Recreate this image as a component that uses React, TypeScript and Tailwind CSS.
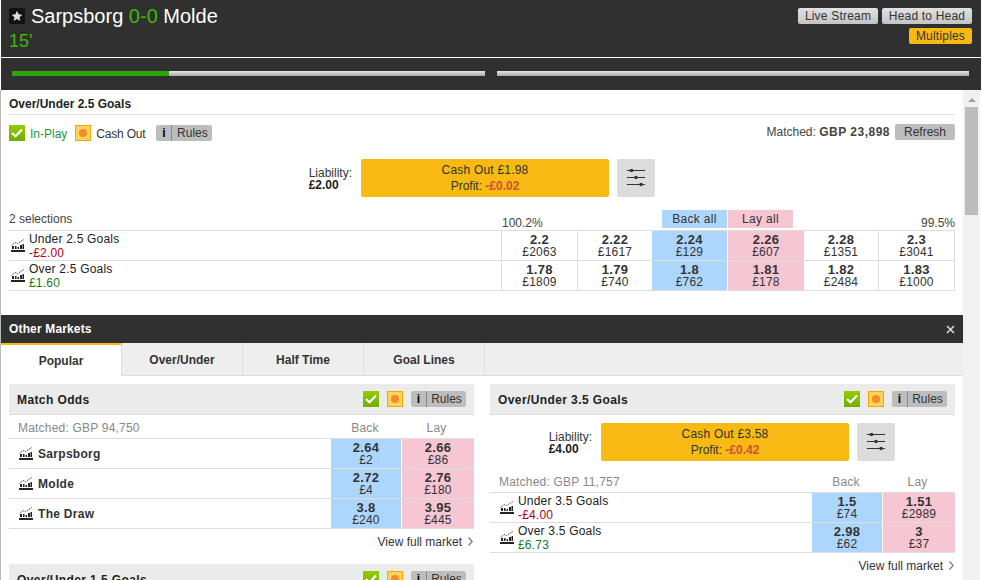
type Sel = { name: string; pl?: string; plColor?: string; offers: [string, string][] };

function ChartIcon() {
  return (
    <svg width="14" height="13" viewBox="0 0 14 13" className="shrink-0" fill="none">
      <path d="M0.5 6.5 L4 3.5 L6.5 4.5 L13 0.5" stroke="#555" strokeWidth="1" strokeDasharray="1.5 0.7" />
      <rect x="1" y="7" width="2" height="3" fill="#222" />
      <rect x="4" y="7" width="1.5" height="3" fill="#222" />
      <rect x="6.5" y="8" width="1.5" height="2" fill="#222" />
      <rect x="9" y="6" width="2" height="4" fill="#222" />
      <rect x="11.5" y="5" width="1.5" height="5" fill="#222" />
      <rect x="0" y="11" width="14" height="2" fill="#222" />
    </svg>
  );
}

function SlidersIcon() {
  return (
    <svg width="18" height="18" viewBox="0 0 18 18" fill="none">
      <path d="M0 1.500h18M0 8.500h18M0 15.500h18" stroke="#333" strokeWidth="1" />
      <circle cx="4.500" cy="1.500" r="1.800" fill="#333" />
      <circle cx="9" cy="8.500" r="1.800" fill="#333" />
      <circle cx="14" cy="15.500" r="1.800" fill="#333" />
    </svg>
  );
}

function InPlayBox() {
  return (
    <span className="w-4 h-4 bg-gradient-to-b from-[#94cc00] to-[#72ac00] flex items-center justify-center shrink-0">
      <svg width="12" height="10" viewBox="0 0 12 10" fill="none">
        <path d="M1 5 L4.500 8.200 L11 1.500" stroke="#fff" strokeWidth="2.200" />
      </svg>
    </span>
  );
}

function CashBox() {
  return (
    <span className="w-4 h-4 bg-[#f6d55c] border border-[#f7a600] flex items-center justify-center shrink-0">
      <span className="w-2 h-2 rounded-full bg-[#f7882c]" />
    </span>
  );
}

function RulesBtn({ className }: { className: string }) {
  return (
    <span className={`h-4 bg-[#bdbdbd] rounded-[2px] flex items-center text-xs text-[#333] shrink-0 ${className}`}>
      <span className="w-4 text-center font-bold text-black border-r border-[#888] leading-4">i</span>
      <span className="flex-1 text-center">Rules</span>
    </span>
  );
}

function Offer({ odds, size, className }: { odds: string; size: string; className: string }) {
  return (
    <div className={`flex flex-col items-center justify-center text-[#333] ${className}`}>
      <span className="font-bold text-[13px] leading-[12px] tracking-[0.3px]">{odds}</span>
      <span className="text-xs leading-[12px] tracking-[0.2px]">{size}</span>
    </div>
  );
}

function PlName({ sel }: { sel: Sel }) {
  return (
    <div className="flex flex-col">
      <span className="text-xs leading-[14px] tracking-[0.2px] text-[#222]">{sel.name}</span>
      <span className={`text-xs leading-[14px] tracking-[0.2px] ${sel.plColor}`}>{sel.pl}</span>
    </div>
  );
}

function CashOutRow({ liab, cash, profit }: { liab: string; cash: string; profit: string }) {
  return (
    <div className="flex justify-end gap-2 h-[38px]">
      <div className="flex flex-col justify-center text-xs leading-[12px] text-[#333] mr-px">
        <span className="mt-[2px]">Liability:</span>
        <span className="font-bold text-[#222]">{liab}</span>
      </div>
      <div className="w-[248px] bg-[#f7b912] rounded-[2px] flex flex-col items-center justify-center text-xs text-[#333]">
        <span className="leading-[16px] tracking-[0.2px]">{cash}</span>
        <span className="leading-[16px]">
          Profit: <span className="font-bold text-[#d0503c]">{profit}</span>
        </span>
      </div>
      <div className="w-[38px] bg-[#dcdcdc] rounded-[2px] flex items-center justify-center">
        <SlidersIcon />
      </div>
    </div>
  );
}

function MiniHeader({ title }: { title: string }) {
  return (
    <div className="h-[31px] bg-[#ebebeb] border-b border-[#ddd] flex items-center pl-2 pr-2 gap-2">
      <span className="font-bold text-xs tracking-[0.4px] text-[#222] flex-1 mt-[2px]">{title}</span>
      <InPlayBox />
      <CashBox />
      <RulesBtn className="w-[55px]" />
    </div>
  );
}

function MiniTable({ matched, rows, withPl }: { matched: string; rows: Sel[]; withPl?: boolean }) {
  return (
    <>
      <div className="h-[24px] pt-[2px] flex items-center border-b border-[#ddd] text-xs text-[#888] tracking-[0.2px]">
        <span className="flex-1 pl-[9px]">{matched}</span>
        <span className="w-[71px] text-center pr-[3px]">Back</span>
        <span className="w-[72px] text-center pr-[3px]">Lay</span>
      </div>
      {rows.map((r) => (
        <div key={r.name} className="h-[30px] flex items-center border-b border-[#ddd]">
          <div className={`flex-1 flex items-center pl-[10px] ${withPl ? "gap-[4px]" : "gap-[5px]"}`}>
            <ChartIcon />
            {withPl ? <PlName sel={r} /> : <span className="text-xs font-bold text-[#333] tracking-[0.3px]">{r.name}</span>}
          </div>
          <Offer odds={r.offers[0][0]} size={r.offers[0][1]} className="w-[70px] h-full bg-[#add6ff]" />
          <Offer odds={r.offers[1][0]} size={r.offers[1][1]} className="w-[72px] h-full ml-px bg-[#f6c6d3]" />
        </div>
      ))}
      <div className="h-[25px] flex items-center justify-end text-xs text-[#333] gap-[6px] pr-px">
        View full market
        <svg width="5" height="9" viewBox="0 0 5 9" fill="none"><path d="M0.500 0.500 L4.200 4.500 L0.500 8.500" stroke="#777" strokeWidth="1.200" /></svg>
      </div>
    </>
  );
}

const mainRows: Sel[] = [
  { name: "Under 2.5 Goals", pl: "-£2.00", plColor: "text-[#b00020]", offers: [["2.2", "£2063"], ["2.22", "£1617"], ["2.24", "£129"], ["2.26", "£607"], ["2.28", "£1351"], ["2.3", "£3041"]] },
  { name: "Over 2.5 Goals", pl: "£1.60", plColor: "text-[#1a7a1a]", offers: [["1.78", "£1809"], ["1.79", "£740"], ["1.8", "£762"], ["1.81", "£178"], ["1.82", "£2484"], ["1.83", "£1000"]] },
];

const oddsRows: Sel[] = [
  { name: "Sarpsborg", offers: [["2.64", "£2"], ["2.66", "£86"]] },
  { name: "Molde", offers: [["2.72", "£4"], ["2.76", "£180"]] },
  { name: "The Draw", offers: [["3.8", "£240"], ["3.95", "£445"]] },
];

const ou35Rows: Sel[] = [
  { name: "Under 3.5 Goals", pl: "-£4.00", plColor: "text-[#b00020]", offers: [["1.5", "£74"], ["1.51", "£2989"]] },
  { name: "Over 3.5 Goals", pl: "£6.73", plColor: "text-[#1a7a1a]", offers: [["2.98", "£62"], ["3", "£37"]] },
];

const cellCls = [
  "w-[76px] border-l border-[#ddd]",
  "w-[75px] border-l border-[#ddd]",
  "w-[75px] bg-[#add6ff]",
  "w-[76px] ml-px bg-[#f6c6d3]",
  "w-[74px]",
  "w-[77px] border-l border-[#ddd] border-r",
];

export default function App() {
  return (
    <div className="w-[982px] h-[580px] overflow-hidden bg-white flex flex-col font-['Liberation_Sans',Arial,sans-serif]">
      <div className="w-[980px] ml-px shrink-0 bg-[#303030]">
        <div className="h-[57px] flex justify-between pl-2 pr-[9px]">
          <div>
            <div className="flex items-center gap-[6px] h-6 mt-1">
              <span className="w-4 h-4 bg-[#111] rounded-[2px] flex items-center justify-center">
                <svg width="12" height="12" viewBox="0 0 24 24" fill="#ddd"><path d="M12 1.500l3.200 7 7.600.800-5.700 5.100 1.600 7.500L12 18l-6.700 3.900 1.600-7.500L1.200 9.300l7.600-.800z" /></svg>
              </span>
              <span className="text-xl leading-6 text-white">
                Sarpsborg <span className="text-[#3cb80c]">0-0</span> Molde
              </span>
            </div>
            <div className="text-[18px] leading-5 text-[#3cb80c] mt-[3px]">15'</div>
          </div>
          <div className="flex flex-col items-end gap-1 pt-2">
            <div className="flex gap-1">
              <span className="h-4 w-20 bg-gradient-to-b from-[#e2e2e2] to-[#c4c4c4] rounded-[2px] text-xs leading-4 text-center text-[#333] tracking-[0.2px]">Live Stream</span>
              <span className="h-4 w-[90px] bg-gradient-to-b from-[#e2e2e2] to-[#c4c4c4] rounded-[2px] text-xs leading-4 text-center text-[#333] tracking-[0.2px]">Head to Head</span>
            </div>
            <span className="h-4 w-[63px] bg-[#f7b912] rounded-[2px] text-xs leading-4 text-center text-[#333] tracking-[0.2px]">Multiples</span>
          </div>
        </div>
        <div className="h-px bg-white" />
        <div className="h-[32px] flex items-start gap-3 pt-[13px] pl-[11px] pr-[11px]">
          <div className="w-[473px] h-[5px] flex bg-gradient-to-b from-[#e6e6e6] to-[#a8a8a8]">
            <div className="w-[157px] h-full bg-[#2ca50a]" />
          </div>
          <div className="w-[472px] h-[5px] bg-gradient-to-b from-[#e6e6e6] to-[#a8a8a8]" />
        </div>
      </div>

      <div className="flex-1 flex min-h-0">
        <div className="w-[963px] border-l border-[#bbb] shrink-0 overflow-hidden">
          <div className="pl-2 pr-2">
            <div className="h-[25px] pt-[4px] border-b border-[#ddd] flex items-center font-bold text-xs text-[#222]">
              Over/Under 2.5 Goals
            </div>
            <div className="flex items-center h-[36px] text-xs">
              <InPlayBox />
              <span className="ml-[5px] text-[#1a9a3a] mt-px">In-Play</span>
              <span className="ml-2"><CashBox /></span>
              <span className="ml-[5px] text-[#333] mt-px tracking-[-0.2px]">Cash Out</span>
              <span className="ml-[11px]"><RulesBtn className="w-14" /></span>
              <span className="flex-1 text-right text-[#444] mr-[5px] -mt-[2px]">
                Matched: <span className="font-bold tracking-[0.5px]">GBP 23,898</span>
              </span>
              <span className="w-[60px] h-4 -mt-[2px] bg-[#bdbdbd] rounded-[2px] text-center leading-4 text-[#333]">Refresh</span>
            </div>
            <div className="mt-[8px] pr-[300px]">
              <CashOutRow liab="£2.00" cash="Cash Out £1.98" profit="-£0.02" />
            </div>
            <div className="h-[33px] flex items-end pb-[2px] text-xs text-[#444]">
              <span className="w-[493px] pb-[1px]">2 selections</span>
              <span className="w-[160px] -mb-[3px]">100.2%</span>
              <span className="w-[65px] h-[18px] bg-[#add6ff] text-center leading-[18px] text-[#333] tracking-[0.3px]">Back all</span>
              <span className="w-[65px] h-[18px] ml-px bg-[#f6c6d3] text-center leading-[18px] text-[#333] tracking-[0.3px]">Lay all</span>
              <span className="flex-1 text-right -mb-[3px]">99.5%</span>
            </div>
            <div className="border-t border-[#ddd]">
              {mainRows.map((r) => (
                <div key={r.name} className="h-[30px] flex items-stretch border-b border-[#ddd]">
                  <div className="w-[492px] flex items-center gap-[4px] pl-[2px]">
                    <ChartIcon />
                    <PlName sel={r} />
                  </div>
                  {r.offers.map((o, i) => (
                    <Offer key={o[1]} odds={o[0]} size={o[1]} className={cellCls[i]} />
                  ))}
                </div>
              ))}
            </div>
          </div>

          <div className="mt-6 h-[28px] bg-[#303030] flex items-center justify-between pl-2 pr-2 text-white">
            <span className="font-bold text-xs tracking-[0.15px]">Other Markets</span>
            <svg width="9" height="9" viewBox="0 0 9 9" fill="none"><path d="M1 1l7 7M8 1l-7 7" stroke="#ddd" strokeWidth="1.500" /></svg>
          </div>
          <div className="h-[33px] flex bg-[#eee] border-b border-[#ddd] text-xs font-bold text-[#333]">
            <div className="w-[121px] h-[33px] bg-white border-t-2 border-[#f7b912] border-r border-r-[#ddd] flex items-center justify-center">Popular</div>
            <div className="w-[121px] pt-[2px] border-r border-[#ddd] flex items-center justify-center">Over/Under</div>
            <div className="w-[121px] pt-[2px] border-r border-[#ddd] flex items-center justify-center">Half Time</div>
            <div className="w-[121px] pt-[2px] border-r border-[#ddd] flex items-center justify-center">Goal Lines</div>
          </div>

          <div className="flex gap-4 pl-2 pr-2 mt-2">
            <div className="w-[465px]">
              <MiniHeader title="Match Odds" />
              <MiniTable matched="Matched: GBP 94,750" rows={oddsRows} />
              <div className="mt-[10px]">
                <MiniHeader title="Over/Under 1.5 Goals" />
              </div>
            </div>
            <div className="w-[465px]">
              <MiniHeader title="Over/Under 3.5 Goals" />
              <div className="mt-2 pr-[60px]">
                <CashOutRow liab="£4.00" cash="Cash Out £3.58" profit="-£0.42" />
              </div>
              <div className="mt-[8px]">
                <MiniTable matched="Matched: GBP 11,757" rows={ou35Rows} withPl />
              </div>
            </div>
          </div>
        </div>

        <div className="w-[17px] bg-[#f1f1f1] flex flex-col items-center shrink-0">
          <div className="mt-[8px] w-0 h-0 border-l-4 border-r-4 border-b-4 border-l-transparent border-r-transparent border-b-[#a0a0a0]" />
          <div className="mt-[5px] w-[13px] h-[108px] bg-[#bcbcbc]" />
        </div>
      </div>
    </div>
  );
}
